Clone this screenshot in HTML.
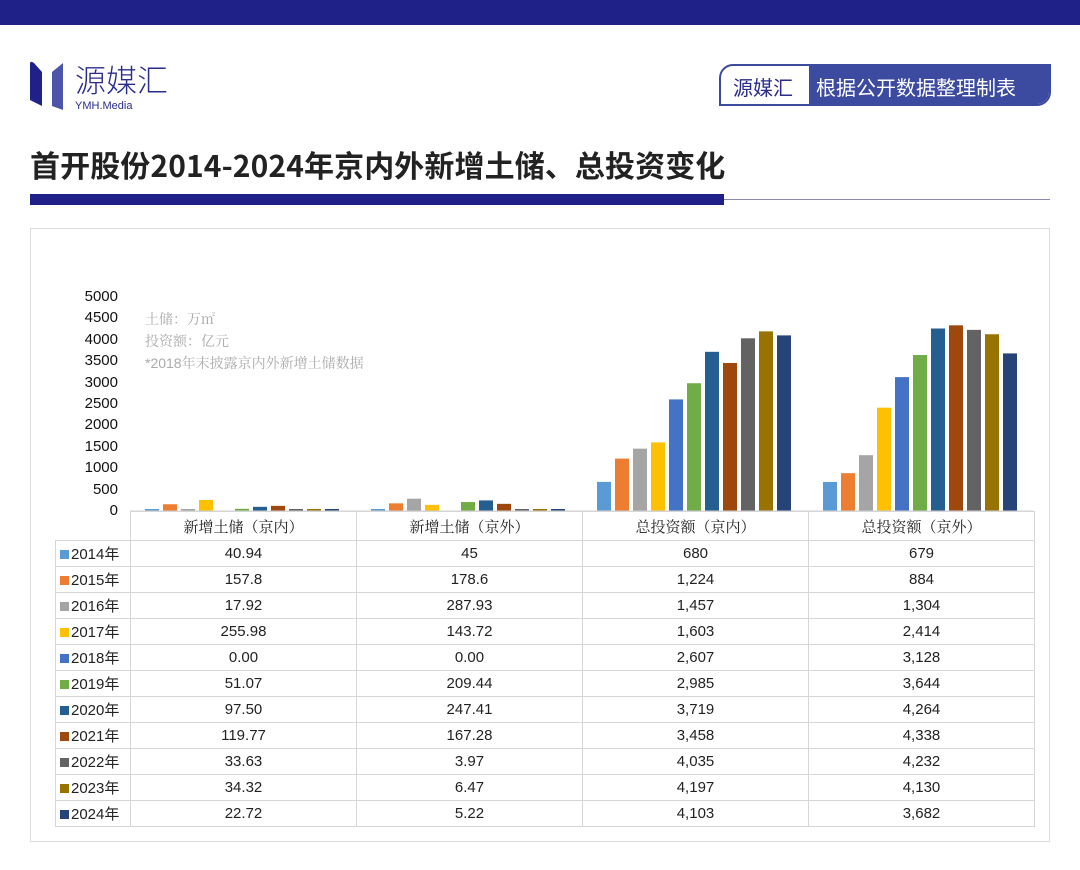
<!DOCTYPE html>
<html><head><meta charset="utf-8"><style>
*{margin:0;padding:0;box-sizing:border-box}
body{width:1080px;height:870px;background:#fff;position:relative;overflow:hidden;font-family:"Liberation Sans","Noto Sans CJK SC",sans-serif}
.a{position:absolute}
table{border-collapse:collapse;position:absolute;left:55px;top:511px;font-size:15px;color:#222}
td{border:1px solid #d6d6d6;height:26px;text-align:center;padding:0;font-family:"Liberation Sans","Noto Serif CJK SC",serif}
tr:first-child td{height:29px}
td.l{width:75px;text-align:left;padding-left:4px;font-family:"Liberation Sans","Noto Sans CJK SC",sans-serif}
td.c{width:226px}
.sq{display:inline-block;width:9px;height:9px;margin-right:2px}
</style></head><body>
<div class="a" style="left:0;top:0;width:1080px;height:25px;background:#1f2189"></div>
<svg class="a" style="left:28px;top:60px" width="140" height="52">
<path d="M2 4 Q2 0 6 3 L14 12 L14 46 L2 40 Z" fill="#1f2189"/>
<path d="M24 12 L35 3 L35 50 L24 46 Z" fill="#4c56a8"/>
</svg>
<div class="a" style="left:75px;top:60px;font-size:31px;color:#2a2c8c;font-family:'Noto Sans CJK SC',sans-serif;font-weight:300;line-height:38px">源媒汇</div>
<div class="a" style="left:75px;top:100px;font-size:11px;color:#2a2c8c">YMH.Media</div>
<div class="a" style="left:719px;top:64px;width:332px;height:42px;border:2px solid #3c4aa0;border-radius:14px 0 14px 0;background:#fff;overflow:hidden">
<div class="a" style="left:88px;top:0;width:250px;height:42px;background:#3c4aa0"></div>
<div class="a" style="left:12px;top:6px;font-size:20px;color:#2a2c8c;font-family:'Noto Sans CJK SC',sans-serif">源媒汇</div>
<div class="a" style="left:95px;top:6px;font-size:20px;color:#fff;font-family:'Noto Sans CJK SC',sans-serif">根据公开数据整理制表</div>
</div>
<div class="a" style="left:30px;top:142px;font-size:30px;font-weight:bold;color:#222;font-family:'Noto Sans CJK SC',sans-serif;letter-spacing:0.1px">首开股份2014-2024年京内外新增土储、总投资变化</div>
<div class="a" style="left:30px;top:194px;width:694px;height:11px;background:#1f2189"></div>
<div class="a" style="left:724px;top:199px;width:326px;height:1px;background:#8a8ab0"></div>
<div class="a" style="left:30px;top:228px;width:1020px;height:614px;border:1px solid #ddd"></div>
<div class="a" style="left:60px;top:286px;width:58px;text-align:right;font-size:15px;line-height:21.4px;color:#111">5000<br>4500<br>4000<br>3500<br>3000<br>2500<br>2000<br>1500<br>1000<br>500<br>0</div>
<div class="a" style="left:145px;top:308px;font-size:14px;line-height:22px;color:#aaa;font-family:'Liberation Sans','Noto Serif CJK SC',serif">土储：万㎡<br>投资额：亿元<br>*2018年末披露京内外新增土储数据</div>
<svg class="a" style="left:0;top:0" width="1080" height="520" id="ch"></svg>
<table>
<tr><td class="l" style="border:none;border-bottom:1px solid #d6d6d6"></td><td class="c">新增土储（京内）</td><td class="c">新增土储（京外）</td><td class="c">总投资额（京内）</td><td class="c">总投资额（京外）</td></tr>
<tr><td class="l"><span class="sq" style="background:#5B9BD5"></span>2014年</td><td>40.94</td><td>45</td><td>680</td><td>679</td></tr>
<tr><td class="l"><span class="sq" style="background:#ED7D31"></span>2015年</td><td>157.8</td><td>178.6</td><td>1,224</td><td>884</td></tr>
<tr><td class="l"><span class="sq" style="background:#A5A5A5"></span>2016年</td><td>17.92</td><td>287.93</td><td>1,457</td><td>1,304</td></tr>
<tr><td class="l"><span class="sq" style="background:#FFC000"></span>2017年</td><td>255.98</td><td>143.72</td><td>1,603</td><td>2,414</td></tr>
<tr><td class="l"><span class="sq" style="background:#4472C4"></span>2018年</td><td>0.00</td><td>0.00</td><td>2,607</td><td>3,128</td></tr>
<tr><td class="l"><span class="sq" style="background:#70AD47"></span>2019年</td><td>51.07</td><td>209.44</td><td>2,985</td><td>3,644</td></tr>
<tr><td class="l"><span class="sq" style="background:#255E91"></span>2020年</td><td>97.50</td><td>247.41</td><td>3,719</td><td>4,264</td></tr>
<tr><td class="l"><span class="sq" style="background:#9E480E"></span>2021年</td><td>119.77</td><td>167.28</td><td>3,458</td><td>4,338</td></tr>
<tr><td class="l"><span class="sq" style="background:#636363"></span>2022年</td><td>33.63</td><td>3.97</td><td>4,035</td><td>4,232</td></tr>
<tr><td class="l"><span class="sq" style="background:#997300"></span>2023年</td><td>34.32</td><td>6.47</td><td>4,197</td><td>4,130</td></tr>
<tr><td class="l"><span class="sq" style="background:#264478"></span>2024年</td><td>22.72</td><td>5.22</td><td>4,103</td><td>3,682</td></tr>
</table>
<script>
var c=["#5B9BD5","#ED7D31","#A5A5A5","#FFC000","#4472C4","#70AD47","#255E91","#9E480E","#636363","#997300","#264478"];
var d=[[40.94,157.8,17.92,255.98,0,51.07,97.5,119.77,33.63,34.32,22.72],[45,178.6,287.93,143.72,0,209.44,247.41,167.28,3.97,6.47,5.22],[680,1224,1457,1603,2607,2985,3719,3458,4035,4197,4103],[679,884,1304,2414,3128,3644,4264,4338,4232,4130,3682]];
var s="",st=[130,356,582,808];
for(var k=0;k<4;k++)for(var i=0;i<11;i++){var h=d[k][i]*0.0428;if(h<2&&d[k][i]>0)h=2;s+='<rect x="'+(st[k]+15+i*18)+'" y="'+(511-h)+'" width="14" height="'+h+'" fill="'+c[i]+'"/>';}
s+='<line x1="130" y1="511" x2="1033" y2="511" stroke="#d0d0d0"/>';
document.getElementById("ch").innerHTML=s;
</script>
</body></html>
